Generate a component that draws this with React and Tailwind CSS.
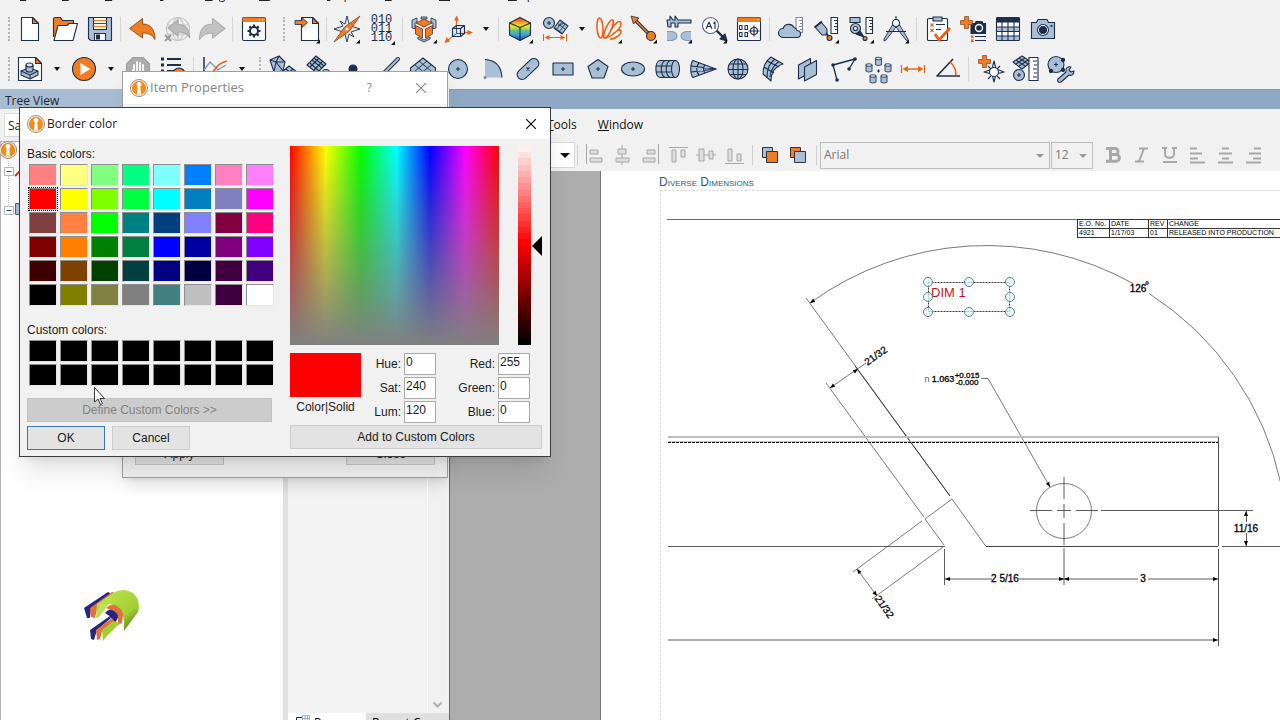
import React from "react";

const NAVY = "#1c2f4a";
const STEEL = "#a9bfd6";
const ORANGE = "#f07d22";

const Icon = ({ children, more }) => (
  <svg
    viewBox="0 0 24 24"
    className="w-6 h-6 overflow-visible shrink-0"
    fill="none"
    stroke={NAVY}
    strokeWidth="1.1"
    strokeLinejoin="round"
    aria-hidden="true"
  >
    {children}
    {more && <path d="M25 22.5v4h-4z" fill="#111" stroke="none" />}
  </svg>
);

const icons = {
  newFile: (
    <>
      <path d="M3.5.5h11l6 6v17h-17z" fill="#fff" />
      <path d="M14.5.5v6h6z" fill={ORANGE} />
    </>
  ),
  open: (
    <>
      <path d="M.5 20V2.500q0-2 2-2h5l2 3h11v6" fill={ORANGE} />
      <path d="M5 8.500h9l2-2h8.500L20 23.500H1z" fill="#fff" />
    </>
  ),
  save: (
    <>
      <path d="M.5.500h23v23H3l-2.500-2z" fill={STEEL} />
      <path d="M5.500.500h13v12h-13z" fill="#fff" />
      <path d="M5.500 3.500h13M5.500 9.500h13" stroke={ORANGE} />
      <path d="M5.500 6.500h13" stroke="#3a4d68" />
      <path d="M6.500 16.500h11v7h-11z" fill="#fff" />
      <path d="M8.500 18h3v4h-3z" fill={NAVY} />
    </>
  ),
  undo: (
    <path
      d="M-.5 11.500 12.500 1.500v5.500c8 0 12.500 5 12.500 15.500-3-5-6.500-6.500-12.500-6.500v5z"
      fill={ORANGE}
      stroke="#7c3b10"
      strokeWidth=".8"
    />
  ),
  globeUndo: (
    <g stroke="#c4c4c4">
      <circle cx="13" cy="12" r="11.500" fill="#efefef" />
      <ellipse cx="13" cy="12" rx="5.500" ry="11.500" />
      <path d="M2 8h22M2 17h22M13 0v24" />
      <path
        d="M3 11 13 3v4.500c8 0 11.500 4 11.500 13-3-4-5-5.500-11.500-5.500v4z"
        fill="#bcbcbc"
        stroke="#a8a8a8"
      />
      <path d="m0 18 6 6m0-6-6 6" stroke="#9a9a9a" strokeWidth="2" />
    </g>
  ),
  redo: (
    <path
      d="M25 11.500 12.500 1.500v5.500C4.500 7-.5 12-.5 22.500c3-5 6.500-6.500 13-6.500v5z"
      fill="#c2c2c2"
      stroke="#adadad"
    />
  ),
  settings: (
    <>
      <rect x=".5" y=".5" width="23" height="23" rx="1.500" fill="#fff" />
      <path d="M1 1h22v3.500H1z" fill={ORANGE} stroke={ORANGE} />
      <path d="M17 2.800h1m2 0h1" stroke="#fff" strokeWidth="1.500" />
      <path
        d="M12 7.500v3m0 7v3M5.500 14h3m7 0h3M7.400 9.400l2.100 2.100m5 5 2.100 2.100M16.600 9.400l-2.100 2.100m-5 5-2.100 2.100"
        strokeWidth="2.200"
      />
      <circle cx="12" cy="14" r="4" fill="#fff" strokeWidth="2" />
    </>
  ),
  importFile: (
    <>
      <path d="M6.500.500h11l6 6v17h-17z" fill="#fff" />
      <path d="M17.500.500v6h6z" fill={ORANGE} />
      <path d="M0 3.500h7v-3l5.500 5-5.500 5v-3H0z" fill={ORANGE} strokeWidth=".8" />
    </>
  ),
  star: (
    <>
      <path
        d="m12-1 2 8 5-3-3 5 9 3-9 3 3 5-5-3-2 8-2-8-5 3 3-5-9-3 9-3-3-5 5 3z"
        fill="#dfe8f1"
        strokeWidth=".9"
      />
      <path d="M25-1 14.500 14-1 25 9.500 10z" fill={ORANGE} stroke="#7c3b10" strokeWidth=".7" />
      <circle cx="12" cy="12" r="1.500" fill="#fff" stroke="none" />
    </>
  ),
  parts: (
    <>
      <path d="m0 3 5-2v4L3 6v6l-3-1zM24 3l-5-2v4l2 1v6l3-1zM6 20l6 3 6-3v2l-6 3-6-3zM9 0h6v2H9z" fill={STEEL} strokeWidth=".8" />
      <path d="m12 2 8 4-8 4-8-4z" fill={ORANGE} stroke="#5a3520" strokeWidth=".8" />
      <path d="m3.500 8.500 7 3.500v9l-7-4z" fill={ORANGE} stroke="#5a3520" strokeWidth=".8" />
      <path d="m20.500 8.500-7 3.500v9l7-4z" fill={ORANGE} stroke="#5a3520" strokeWidth=".8" />
    </>
  ),
  axes: (
    <>
      <path d="M9.500 11V1M18 15.500h5M5 20l-5 4" stroke="#e8641b" strokeWidth="1.300" />
      <path
        d="M9.500-1.500 12 3.500H7zM26 15.500 20.500 13v5zM-2.500 26 3 24.500-.5 20z"
        fill="#e8641b"
        stroke="none"
      />
      <path d="M5.500 11.500h8v8h-8zM5.500 11.500l4-3h8v8l-4 3M13.500 11.500l4-3" fill="#dbe5ef" />
      <path d="M9.500 8.500v8h8m-8 0-4 3" strokeWidth=".8" />
    </>
  ),
  rainbow: (
    <>
      <defs>
        <linearGradient id="spectrum" x1="0" y1="0" x2="0" y2="1">
          <stop offset="0" stopColor="#e8281e" />
          <stop offset=".22" stopColor="#f7a51c" />
          <stop offset=".38" stopColor="#f2ea1f" />
          <stop offset=".58" stopColor="#5fc08c" />
          <stop offset=".75" stopColor="#3f9ed8" />
          <stop offset="1" stopColor="#2747a8" />
        </linearGradient>
      </defs>
      <path d="M12 .5 22.500 6v12L12 23.500 1.500 18V6z" fill="url(#spectrum)" />
      <path d="M1.500 6 12 10.500 22.500 6M12 10.500v13" />
    </>
  ),
  gauge: (
    <>
      <circle cx="6" cy="6" r="5.500" fill={STEEL} />
      <path d="M6 4v4M4 6h4" />
      <path d="m17 3 8 6-6 8-8-6z" fill={STEEL} />
      <path d="m14 6 8 6m-7-3 6-3m-9 5 8 6m-1-12-6 8m9-6-6 8" strokeWidth=".8" />
      <path d="M.5 17v7M23.500 17v7M3 20.500h18" stroke="#e8641b" />
      <path d="m1.500 20.500 5-2.500v5zM22.500 20.500l-5-2.500v5z" fill="#e8641b" stroke="none" />
    </>
  ),
  flow: (
    <g stroke="#e8641b" strokeWidth="1.600">
      <ellipse cx="3" cy="11" rx="3" ry="10" transform="rotate(-4 3 11)" />
      <ellipse cx="11.500" cy="12" rx="2.700" ry="10" transform="rotate(24 11.500 12)" />
      <path d="M8 21c4 0 17-9 16-15-1-4-7 1-10 7M13 22c4 1 12-5 11-8-1-2-5 0-8 3" />
    </g>
  ),
  probe: (
    <>
      <path d="M2 2 19 19" strokeWidth="3.500" />
      <path d="M2 2 19 19" stroke={ORANGE} strokeWidth="1.600" />
      <path d="M-1-1 7 1 1.500 7z" fill={ORANGE} strokeWidth=".8" />
      <circle cx="19" cy="19" r="4.500" fill={ORANGE} />
    </>
  ),
  caliper: (
    <>
      <path d="M0 3h3v-4l3 4h2v-4l3 4h13v3H11v4H8V6H4v4H1z" fill={STEEL} />
      <path d="M0 14.500h5q5 1 5 4.500t-5 4.500H0M24 14.500h-5q-5 1-5 4.500t5 4.500h5" fill={STEEL} stroke="#8199b3" />
    </>
  ),
  annotate: (
    <>
      <path d="m14 13 9 9" strokeWidth="2.400" />
      <path d="m25 24-7-2 5-5z" fill={NAVY} />
      <circle cx="8.500" cy="8.500" r="8" fill="#fff" stroke="#51647d" />
      <path d="m4 12 3-7 3 7M5.500 9.500h3M11.500 6.500 13 5v7" />
    </>
  ),
  readout: (
    <>
      <rect x=".5" y=".5" width="23" height="23" rx="1" fill="#fff" />
      <path d="M1 1h22v3.500H1z" fill={ORANGE} stroke={ORANGE} />
      <path d="M20 2.500h2" stroke="#fff" />
      <path d="M2.500 8.500H5v4H2.500zM8 8.500h2.500v4H8zM2.500 15.500H5v4H2.500zM8 15.500h2.500v4H8z" />
      <circle cx="17" cy="14" r="3.500" />
      <path d="M17 8.500v11M11.500 14h11" />
    </>
  ),
  cloud: (
    <>
      <path d="M17 .5h6.500v15H17z" fill="#fff" stroke="#7a8899" />
      <path d="M20 3.500h3m-2 3h2m-3 3h3m-2 3h2" stroke="#7a8899" />
      <path d="M4 20.500a4.500 4.500 0 0 1 0-9 6 6 0 0 1 11-1 4 4 0 0 1 3 3 3.500 3.500 0 0 1 0 7z" fill={STEEL} />
    </>
  ),
  scanRuler: (
    <>
      <path d="M17 .5h6.500v16H17z" fill="#fff" />
      <path d="M20 3.500h3m-2 3h2m-3 3h3m-2 3h2" />
      <path d="m1 10 6-5 6 7v6h-5z" fill={STEEL} />
      <path d="M.5 10.500 8 4.500M12 16l3 4" strokeWidth="1.800" />
      <circle cx="15.500" cy="21" r="2.500" fill={ORANGE} />
    </>
  ),
  probeRuler: (
    <>
      <path d="M17 .5h6.500v16H17z" fill="#fff" />
      <path d="M20 3.500h3m-2 3h2m-3 3h3m-2 3h2" />
      <path d="M1 .5h10v5H1z" fill={STEEL} />
      <circle cx="6.500" cy="11.500" r="5" fill={STEEL} />
      <circle cx="6.500" cy="11.500" r="2" fill="#fff" />
      <path d="m7 17 4-3 4 6z" fill={NAVY} />
      <circle cx="16" cy="21.500" r="2" fill={ORANGE} />
    </>
  ),
  compass: (
    <>
      <path d="M9 7 0 22v2l2-1L12 10zM15 7l9 15v2l-2-1L12 10z" fill={STEEL} strokeWidth=".9" />
      <path d="M2 14.500h20M12-1v4" />
      <circle cx="12" cy="6" r="3.500" fill="#fff" />
    </>
  ),
  checklist: (
    <>
      <rect x="1.500" y="1.500" width="20" height="22" rx="1" fill="#fff" />
      <path d="M7 0h9v4H7z" fill={STEEL} />
      <path d="m4.500 6.500 3 3m0-3-3 3m0 2.500 3 3m0-3-3 3" stroke="#e8641b" />
      <path d="M10 7.500h9M10 12.500h5" />
      <path d="m9 17 4 6 11-12" stroke="#e8641b" strokeWidth="3" />
    </>
  ),
  addShot: (
    <>
      <path d="M10 6.500h4l1-2h6l1 2h2.500v10H10z" fill={NAVY} />
      <circle cx="18" cy="11" r="3.500" fill={NAVY} stroke="#fff" strokeWidth="1.400" />
      <path d="M3.500-.5h4v4h4v4h-4v4h-4v-4h-4v-4h4z" fill={ORANGE} stroke="#8a4415" strokeWidth=".7" />
      <path d="m10 18.500 2.500 2.500m0-2.500L10 21m0 1.500 2.500 2.500m0-2.500L10 25" stroke="#e8641b" />
      <path d="M14 19.500h11M14 23.500h11" />
    </>
  ),
  grid: (
    <>
      <rect x=".5" y=".5" width="23" height="23" rx="1" fill="#fff" />
      <path d="M1 1h22v4H1z" fill={NAVY} />
      <path d="M1 10h22v4H1zM1 19h22v4H1z" fill={STEEL} stroke="none" />
      <path d="M.5 10h23M.5 14.500h23M.5 19h23M6 5v18.500M12 5v18.500M18 5v18.500" />
    </>
  ),
  camera: (
    <>
      <path d="M.5 5.500h5l1.500-3h9l1.500 3h6v16H.5z" fill={STEEL} />
      <circle cx="12" cy="13" r="5.500" fill="#fff" />
      <circle cx="12" cy="13" r="3.500" fill={NAVY} />
      <path d="M19.500 9h2" strokeWidth="1.800" />
    </>
  ),
  partFile: (
    <>
      <path d="M.5.500h17l6 6v17H.5z" fill="#fff" />
      <path d="M17.500.500v6h6z" fill={ORANGE} />
      <path d="m3 14 8-3 9 3v4l-8 4-9-4z" fill={STEEL} />
      <path d="m3 14 9 4 8-4M12 18v4" />
      <path d="M8 8v5a3.500 2 0 0 0 7 0V8" fill={STEEL} />
      <ellipse cx="11.500" cy="8" rx="3.500" ry="2" fill="#d9e3ee" />
    </>
  ),
  play: (
    <>
      <circle cx="12" cy="12" r="11.500" fill={ORANGE} />
      <path d="m8.500 6 10 6-10 6z" fill="#fff" stroke="none" />
    </>
  ),
  stop: (
    <>
      <path d="M7 .5h10l6.500 6.500v10L17 23.500H7L.5 17V7z" fill="#adadad" stroke="#9e9e9e" />
      <path d="M8 15V8m3 6V5m3 9V6m3 9V8M7 13v4l4 5h5l2-5" stroke="#f4f4f4" strokeWidth="2" strokeLinecap="round" />
    </>
  ),
  macro: (
    <>
      <path d="M0 2h3m-3 6h3m-3 6h3" strokeWidth="3" />
      <path d="M6 2h14M6 8h14M6 14h14" strokeWidth="2" />
      <circle cx="18" cy="17" r="6" fill={ORANGE} />
    </>
  ),
  chart: (
    <>
      <path d="M1 0v23h22" strokeWidth="1.500" />
      <path d="m1 13 6-8 8 8 8-5" stroke="#7f9ab6" strokeWidth="1.300" />
      <path d="M2 20q8-4 11-9t11-7" stroke="#e8641b" strokeWidth="1.700" />
    </>
  ),
  mesh: (
    <>
      <path d="M-1 3 8-1l6 6-2 9-9 1z" fill={STEEL} />
      <path d="m-1 3 6 2h9M8-1 5 5 3 15M5 5l7 9" />
      <path d="m18 9 8 6-8 6-7-6z" fill={STEEL} />
      <path d="m15 12 7 6m0-6-7 6" />
    </>
  ),
  surface: (
    <>
      <path d="m10-1 10 8-9 9-10-8z" fill={STEEL} />
      <path d="m8 1 10 8M6 3l10 8M4 6l9 8M13 1 4 10M17 4l-9 9" />
      <circle cx="20" cy="17" r="4.500" fill={STEEL} />
    </>
  ),
  point: <circle cx="12" cy="12" r="4" fill={NAVY} />,
  line: (
    <>
      <path d="M2 22 22 2" strokeWidth="4" strokeLinecap="round" />
      <path d="M2 22 22 2" stroke={STEEL} strokeWidth="2.200" strokeLinecap="round" />
    </>
  ),
  plane: (
    <>
      <path d="m12 1 12.500 10v4L12 24-.5 15v-4z" fill={STEEL} />
      <path d="m8 4 12 10M4 8l12 10M16 4 4 14M20 8 8 18" strokeWidth=".9" />
    </>
  ),
  circle: (
    <>
      <circle cx="12" cy="12" r="9.500" fill={STEEL} />
      <path d="M12 10v4M10 12h4" />
    </>
  ),
  arc: (
    <>
      <path d="M4 20.500v-18q16 1 17 18z" fill={STEEL} stroke="none" />
      <path d="M4 2.500q16 1 17 18" />
      <circle cx="4" cy="20.500" r="1.500" fill="#7a8796" stroke="none" />
    </>
  ),
  slot: (
    <>
      <rect x="-1" y="7" width="26" height="10" rx="5" fill={STEEL} transform="rotate(-43 12 12)" />
      <path d="m10.500 10.500 3 3m0-3-3 3" />
    </>
  ),
  rect: (
    <>
      <path d="M2 6h20v12H2z" fill={STEEL} />
      <path d="M12 10v4M10 12h4" />
    </>
  ),
  polygon: (
    <>
      <path d="m12 2.500 10 7L18 21H6L2 9.500z" fill={STEEL} />
      <path d="M12 10v4M10 12h4" />
    </>
  ),
  ellipse: (
    <>
      <ellipse cx="12" cy="12" rx="11.500" ry="7" fill={STEEL} />
      <path d="M12 10v4M10 12h4" />
    </>
  ),
  cylinder: (
    <>
      <path d="M4 3.500h16v17H4C-1.500 20.500-1.500 3.500 4 3.500z" fill={STEEL} />
      <path d="M9 3.500c-5 3-5 14 0 17M14 3.500c-5 3-5 14 0 17M0 9h15M0 15h15" />
      <ellipse cx="19.500" cy="12" rx="4" ry="8.500" fill={STEEL} />
    </>
  ),
  cone: (
    <>
      <path d="M2 3.500 25 12 2 20.500c-3-3-3-14 0-17z" fill={STEEL} />
      <path d="M8 6c-3 3-3 9 0 12M14 8c-2 2-2 6 0 8M0 9l25 3L0 15" />
    </>
  ),
  sphere: (
    <>
      <circle cx="12" cy="12" r="10" fill={STEEL} />
      <ellipse cx="12" cy="12" rx="5" ry="10" />
      <path d="M12 2v20M3.500 7h17M2 12.500h20M3.500 17.500h17" />
    </>
  ),
  freeform: (
    <>
      <path d="m10 0 12 7q-12 4-12 17L2 17Q2 6 10 0z" fill={STEEL} />
      <path d="m6 4 12 6M3 10l10 6M14 2Q6 8 6 20M18 4.500Q10 10 9 20" />
    </>
  ),
  planes: (
    <>
      <path d="m2.500 8 12-6.500v14l-12 6.500z" fill={STEEL} />
      <path d="m8.500 10 12-6.500v14l-12 6.500z" fill={STEEL} />
    </>
  ),
  polyline: (
    <>
      <path d="m6 23-4-15L24 2l-6 10" strokeWidth="1.300" />
      <path d="M6 23h.1M2 8h.1M24 2h.1M18 12h.1" strokeWidth="3.500" strokeLinecap="round" />
    </>
  ),
  pattern: (
    <>
      {[
        [9.500, 0],
        [0, 6.500],
        [19, 6.500],
        [4, 17.500],
        [15, 17.500],
      ].map(([x, y]) => (
        <g key={`${x}-${y}`} transform={`translate(${x} ${y})`} stroke="#43566f">
          <path d="M0 1.500v6q3 2 6 0v-6" fill={STEEL} />
          <ellipse cx="3" cy="1.500" rx="3" ry="1.300" fill="#dbe5ef" />
        </g>
      ))}
      <path d="M12.500 12.500v3M11 14h3" />
    </>
  ),
  distance: (
    <>
      <path d="M.5 8v8M23.500 8v8M3 12h18" stroke="#e8641b" strokeWidth="1.300" />
      <path d="m1.500 12 5.500-3v6zM22.500 12 17 9v6z" fill="#e8641b" stroke="none" />
    </>
  ),
  angle: (
    <>
      <path d="M17 2 1 19h23" strokeWidth="1.600" />
      <path d="M14 5q6 5 6 13" stroke="#e8641b" strokeWidth="1.600" />
    </>
  ),
  addStar: (
    <>
      <path d="m10 9 3 3m9-3-3 3m-9 10 3-3m9 3-3-3" />
      <path d="m16 4 2 8 8 3-8 2-2 8-2-8-8-2 8-3z" fill="#fff" />
      <circle cx="16" cy="15" r="4.500" fill="#fff" />
      <path d="M4.500-1.500h4v4h4v4h-4v4h-4v-4h-4v-4h4z" fill={ORANGE} stroke="#8a4415" strokeWidth=".7" />
    </>
  ),
  measureSet: (
    <>
      <path d="m9-1 9 6-9 7-9-7z" fill={STEEL} />
      <path d="m6 1 9 6M3 3l9 6M12 1 3 7m12-4-9 6" />
      <circle cx="6" cy="18" r="5.500" fill={STEEL} />
      <path d="M6 16v4M4 18h4" />
      <path d="M16 .5h9v23h-9z" fill="#fff" />
      <path d="M20 4h4m-3 4h3m-4 4h4m-3 4h3m-4 4h4" />
    </>
  ),
  circleTool: (
    <>
      <circle cx="8" cy="7.500" r="8" fill={STEEL} />
      <path d="M8 5.500v4M6 7.500h4" />
      <circle cx="3" cy="14" r="1.600" fill={NAVY} />
      <circle cx="15" cy="3" r="1.600" fill={NAVY} />
      <circle cx="15" cy="13" r="1.600" fill={NAVY} />
      <path d="m10 22 8-7c-1-4 2-6 5-5l-2 3 2 2 3-1c0 4-3 5-5 4l-8 7c-3 1-4-1-3-3z" fill={STEEL} />
    </>
  ),
};

const topRow = [
  "grip",
  ["newFile", "New"],
  ["open", "Open"],
  ["save", "Save"],
  "sep",
  ["undo", "Undo"],
  ["globeUndo", "Undo all"],
  ["redo", "Redo"],
  "sep",
  ["settings", "Options"],
  "gripWide",
  ["importFile", "Import", true],
  "sepTight",
  ["star", "Align", true],
  ["binary", "Digitize", true],
  "sep",
  ["parts", "Pieces", true],
  ["axes", "Coordinate systems"],
  "drop",
  "sep",
  ["rainbow", "Color map", true],
  ["gauge", "Features"],
  "drop",
  ["flow", "Cross-sections", true],
  ["probe", "Comparison points", true],
  ["caliper", "Gauges", true],
  ["annotate", "Annotations", true],
  ["readout", "Digital readout"],
  "sep",
  ["cloud", "Scan"],
  ["scanRuler", "Probe scan", true],
  ["probeRuler", "Probe", true],
  ["compass", "Construct", true],
  "sep",
  ["checklist", "Review"],
  ["addShot", "Add snapshot"],
  ["grid", "Table"],
  ["camera", "Snapshot"],
];

const bottomRow = [
  "grip",
  ["partFile", "Piece"],
  "drop",
  ["play", "Play"],
  "drop",
  ["stop", "Pause"],
  ["macro", "Sequence"],
  "sep",
  ["chart", "Statistics"],
  "drop",
  "gripNarrow",
  ["mesh", "Mesh"],
  ["surface", "Surface"],
  ["point", "Point"],
  ["line", "Line"],
  ["plane", "Plane"],
  ["circle", "Circle"],
  ["arc", "Arc"],
  ["slot", "Slot"],
  ["rect", "Rectangle"],
  ["polygon", "Polygon"],
  ["ellipse", "Ellipse"],
  ["cylinder", "Cylinder"],
  ["cone", "Cone"],
  ["sphere", "Sphere"],
  ["freeform", "Freeform surface"],
  ["planes", "Parallel planes"],
  ["polyline", "Polyline"],
  ["pattern", "Pattern"],
  ["distance", "Distance"],
  ["angle", "Angle"],
  "sep",
  ["addStar", "New alignment"],
  ["measureSet", "Measure"],
  ["circleTool", "Edit feature"],
];

const Grip = ({ className }) => (
  <span className={`flex h-6 shrink-0 ${className}`}>
    <span className="border-l-2 border-dotted border-[#b4b4b4]" />
  </span>
);

const ToolRow = ({ items }) => (
  <div className="flex h-10 items-center">
    {items.map((item, i) => {
      if (item === "sep" || item === "sepTight")
        return (
          <span
            key={i}
            className={`h-6 w-px shrink-0 bg-[#d4d4d4] ${
              item === "sep" ? "mx-[3px]" : "mx-0.5"
            }`}
          />
        );
      if (item === "grip") return <Grip key={i} className="w-3 pl-2" />;
      if (item === "gripWide") return <Grip key={i} className="w-[18px] pl-3" />;
      if (item === "gripNarrow") return <Grip key={i} className="w-[14px] pl-2" />;
      if (item === "drop")
        return (
          <button
            key={i}
            aria-label="More options"
            className="flex w-[19px] shrink-0 justify-center"
          >
            <svg viewBox="0 0 6 4" className="h-1 w-1.5">
              <path d="M0 0h6L3 4z" fill="#111" />
            </svg>
          </button>
        );
      const [name, label, more] = item;
      return (
        <button
          key={i}
          aria-label={label}
          className="relative flex w-[35px] shrink-0 items-center justify-center"
        >
          {name === "binary" ? (
            <>
              <span className="font-['Liberation_Mono',monospace] text-[12px] leading-[9px] text-[#1c2f4a]">
                010
                <br />
                011
                <br />
                110
              </span>
              <svg viewBox="0 0 4 4" className="absolute -bottom-0.5 right-1 h-1 w-1">
                <path d="M4 0v4H0z" fill="#111" />
              </svg>
            </>
          ) : (
            <Icon more={more}>{icons[name]}</Icon>
          )}
        </button>
      );
    })}
  </div>
);

const AppLogo = () => (
  <svg viewBox="0 0 18 18" className="h-[18px] w-[18px] shrink-0" aria-hidden="true">
    <circle cx="9" cy="9" r="8.500" fill="#fff" stroke="#7d6a58" strokeWidth=".8" />
    <circle cx="9" cy="9" r="7.200" fill="#f28c1a" />
    <path
      d="M9 3a2.300 2.300 0 0 1 1.300 4.300L11 15.500H7l.7-8.200A2.300 2.300 0 0 1 9 3z"
      fill="#fff"
    />
  </svg>
);

const CloseIcon = () => (
  <svg viewBox="0 0 10 10" className="h-2.5 w-2.5" aria-hidden="true">
    <path d="m0 0 10 10M10 0 0 10" stroke="currentColor" strokeWidth="1.100" />
  </svg>
);

const topMenu = [
  ["File", "w-[42px]"],
  ["Edit", "w-[43px]"],
  ["View", "w-[55px]"],
  ["Insert", "w-[45px]"],
  ["Align", "w-[54px]"],
  ["Measure", "w-[68px]"],
  ["Inspect", "w-[58px]"],
  ["Tools", "w-[54px]"],
  ["Window", "w-[69px]"],
  ["Help", "w-[40px]"],
];

const TreeView = () => (
  <aside className="flex w-[283px] shrink-0 flex-col bg-white">
    <h2 className="h-5 bg-[#a8bdd2] pl-[5px] text-[12px] leading-6 text-[#1e2a38]">
      Tree View
    </h2>
    <div className="h-8 shrink-0 bg-[#f1f1f1] px-1 py-1">
      <div className="h-6 border border-[#dcdcdc] bg-white pl-[3px] text-[12px] leading-6 text-[#222]">
        Saved
      </div>
    </div>
    <div className="min-h-0 flex-1 border-t border-l border-[#b5b5b5]">
      <div className="flex h-4 items-center">
        <span className="-ml-0.5">
          <AppLogo />
        </span>
      </div>
      <svg viewBox="0 0 24 64" className="h-16 w-6" fill="none">
        <path d="M7.500 3v9M7.500 18v30" stroke="#bcbcbc" strokeDasharray="1 1" />
        <path d="M3.500 9.500h9v8h-9zM3.500 48.500h9v8h-9z" fill="#fff" stroke="#b8b8b8" />
        <path d="M5.500 13.500h5M5.500 52.500h5" stroke="#2f4a8a" />
        <path d="m14 18 6-6" stroke="#d93a1f" strokeWidth="2" />
        <path d="M14.500 45.500h7v11h-7z" fill={STEEL} stroke="#4c607b" />
      </svg>
      <svg viewBox="0 0 58 54" className="mt-[366px] ml-[82px] h-[54px] w-[58px]">
        <defs>
          <linearGradient id="lime" x1=".3" y1=".1" x2="1" y2="1">
            <stop offset="0" stopColor="#b9e04a" />
            <stop offset=".55" stopColor="#a2cf34" />
            <stop offset="1" stopColor="#3f6b12" />
          </linearGradient>
        </defs>
        <path d="M1 20 25 4l2 1-1 3-18 12-1 10H4z" fill="#23277f" />
        <path d="M7 20 29 4l3 1-3 5-15 11-2 9-4-1z" fill="#e2703a" />
        <path
          d="M14 16 30 5q10-6 20 0 8 7 5 19L41 43V33Q39 18 26 16l-10 13-3 1z"
          fill="url(#lime)"
        />
        <path d="m18 16 9 1-12 12-2-1z" fill="#fff" opacity=".15" />
        <path d="M23 20q4-4 9-3 8 4 8 10l-1 8-4 2q1-13-12-17z" fill="#e2703a" />
        <path d="M22 25q3-4 7-3 6 3 6 7l-3 7-3-5q-3-4-7-6z" fill="#23277f" />
        <path d="m7 42 20-14 1 2-14 12-3 10-3-1z" fill="#23277f" />
        <path d="m13 42 16-12 2 3-12 10-2 8-3 1z" fill="#e2703a" />
        <path d="m19 42 12-9 6 2-14 14-3 4z" fill="#a2cf34" />
      </svg>
    </div>
  </aside>
);

const PropertyPanel = () => (
  <section className="flex w-[161px] shrink-0 flex-col bg-[#f3f3f3]">
    <div className="flex min-h-0 flex-1 justify-end pr-0.5">
      <div className="flex w-5 flex-col items-center justify-end border-l border-white bg-[#f1f1f1] pb-1">
        <svg viewBox="0 0 9 8" className="h-2 w-[9px]" fill="none">
          <path d="m.5 1.500 4 4 4-4" stroke="#b0b0b0" strokeWidth="2" />
        </svg>
      </div>
    </div>
    <div role="tablist" className="flex h-[7px] shrink-0 items-start overflow-hidden text-[12px] leading-5">
      <button role="tab" className="flex h-5 w-[78px] items-start gap-1 bg-white pl-2">
        <svg viewBox="0 0 14 14" className="mt-0.5 h-3.5 w-3.5 shrink-0" fill="none">
          <path d="M.5 2.500h6v9h-6z" stroke={NAVY} />
          <path d="M6.500.500h7v9h-7zM9 0v9M11.500 0v9M6 3.500h8" stroke="#9fb0c2" />
        </svg>
        Pages
      </button>
      <button role="tab" className="h-5 flex-1 bg-[#e0e0e0] pl-[6px] text-left whitespace-nowrap">
        Report Co
      </button>
    </div>
  </section>
);

const fmtIcons = {
  left: <path d="M.5-3v20M4 3h8v4H4zM4 11h12v4H4z" />,
  center: <path d="M8-2v4M8 7v4M8 15v3M4 2h8v5H4zM2 11h13v4H2z" />,
  right: <path d="M16.500-3v20M5 3h8v4H5zM1 11h12v4H1z" />,
  top: <path d="M-1 .500h19M2 3h4v12H2zM11 3h4v7h-4z" />,
  middle: <path d="M-2 8h3M6 8h5M15 8h3M1 2h5v12H1zM11 4h4v8h-4z" />,
  bottom: <path d="M-1 16.500h19M2 2h4v12H2zM11 7h4v7h-4z" />,
};

const textAlignIcons = {
  "Align left": "M0 1.500h7M0 6.500h12M0 11.500h8M0 15.500h15",
  "Align center": "M4 1.500h7M1 6.500h13M4 11.500h7M0 15.500h15",
  "Align right": "M8 1.500h7M3 6.500h12M7 11.500h8M0 15.500h15",
};

const BarSep = () => <span className="mr-[3px] ml-1 h-5 w-px shrink-0 bg-[#cfcfcf]" />;

const FormatBar = () => (
  <div className="flex h-[30px] shrink-0 items-center pb-0.5">
    <div className="flex h-[26px] w-[126px] shrink-0 items-center justify-end border border-[#d8d8d8] bg-white pr-1">
      <svg viewBox="0 0 10 5" className="h-[5px] w-2.5">
        <path d="M0 0h10L5 5z" fill="#111" />
      </svg>
    </div>
    <span className="mx-0.5 h-5 w-px shrink-0 bg-[#cfcfcf]" />
    {Object.entries(fmtIcons).map(([name, path]) => (
      <button
        key={name}
        aria-label={`Align objects ${name}`}
        className="flex w-7 shrink-0 justify-center"
      >
        <svg viewBox="0 0 17 17" className="h-[17px] w-[17px] overflow-visible" fill="#dedede" stroke="#a6a6a6">
          {path}
        </svg>
      </button>
    ))}
    <BarSep />
    <button aria-label="Bring to front" className="flex w-7 shrink-0 justify-center">
      <svg viewBox="0 0 16 16" className="h-4 w-4" stroke="#333">
        <path d="M.5.500h10v10H.5z" fill={STEEL} />
        <path d="M4.500 4.500h11v11h-11z" fill={ORANGE} />
      </svg>
    </button>
    <button aria-label="Send to back" className="flex w-7 shrink-0 justify-center">
      <svg viewBox="0 0 16 16" className="h-4 w-4" stroke="#333">
        <path d="M.5.500h10v10H.5z" fill={ORANGE} />
        <path d="M4.500 4.500h11v11h-11z" fill={STEEL} />
      </svg>
    </button>
    <BarSep />
    <div className="relative w-[230px] shrink-0">
      <select
        disabled
        aria-label="Font"
        className="block h-[27px] w-full appearance-none border border-[#bdbdbd] bg-[#f1f1f1] pl-[3px] text-[12px] text-[#777] opacity-100"
      >
        <option>Arial</option>
      </select>
      <svg viewBox="0 0 8 4" className="pointer-events-none absolute top-3 right-1.5 h-1 w-2">
        <path d="M0 0h8L4 4z" fill="#999" />
      </svg>
    </div>
    <div className="relative ml-px w-[42px] shrink-0">
      <select
        disabled
        aria-label="Font size"
        className="block h-[27px] w-full appearance-none border border-[#bdbdbd] bg-[#f1f1f1] pl-[3px] text-[12px] text-[#777] opacity-100"
      >
        <option>12</option>
      </select>
      <svg viewBox="0 0 8 4" className="pointer-events-none absolute top-3 right-1.5 h-1 w-2">
        <path d="M0 0h8L4 4z" fill="#999" />
      </svg>
    </div>
    <div className="ml-1.5 flex text-[#a8a8a8]">
      <button aria-label="Bold" className="flex w-7 justify-center">
        <svg viewBox="0 0 15 16" className="h-4 w-[15px]" fill="none" stroke="currentColor">
          <path d="M0 1.500h9a3 3 0 0 1 0 6H5h5a3.300 3.300 0 0 1 0 6.800H0M4.500 1v13" strokeWidth="3" />
        </svg>
      </button>
      <button aria-label="Italic" className="flex w-7 justify-center">
        <svg viewBox="0 0 15 16" className="h-4 w-[15px]" fill="none" stroke="currentColor">
          <path d="M5 1.500h9M1 14.500h9M10 1.500l-5 13" strokeWidth="2" />
        </svg>
      </button>
      <button aria-label="Underline" className="flex w-7 justify-center">
        <svg viewBox="0 0 15 16" className="h-4 w-[15px]" fill="none" stroke="currentColor">
          <path d="M0 1h5M10 1h5M3 1v6c0 5 9 5 9 0V1M1 15h14" strokeWidth="1.900" />
        </svg>
      </button>
      {Object.entries(textAlignIcons).map(([label, d]) => (
        <button key={label} aria-label={label} className="flex w-7 justify-center">
          <svg viewBox="0 0 15 17" className="h-[17px] w-[15px]" fill="none" stroke="currentColor">
            <path d={d} strokeWidth="2" />
          </svg>
        </button>
      ))}
    </div>
  </div>
);

// arrow head whose tip sits on x,y
const Arrow = ({ x, y, angle }) => (
  <path
    d="M0 0-5-2v4z"
    fill="#000"
    stroke="none"
    transform={`translate(${x} ${y}) rotate(${angle})`}
  />
);

const Drawing = () => (
  <svg
    viewBox="601 171 679 549"
    className="absolute top-0 left-0 h-[549px] w-[679px] font-['Liberation_Sans',sans-serif]"
    fill="none"
    stroke="#555"
    strokeWidth=".8"
  >
    <path d="M660.500 190.500H1280M660.500 190.500V720" stroke="#c4c4c4" strokeDasharray="2 2" />
    <path d="M667 219.500h613" stroke="#444" />
    <path d="M810 303A300.500 300.500 0 0 1 1133 283.500M1149 293.500A300.500 300.500 0 0 1 1281 484" />
    <path d="M806 298 950 496M952 499l34 47.500h232M826 383l98 134M925 519l19 26" />
    <path d="m855 366 95 130" stroke="#222" />
    <path d="m830 388 36-25M952 499l-27 20M922 521l-69 51M943 547l-71 52M857 569l20 27" />
    <path d="M981 378.500h7L1050 487" />
    <path d="M668 437h550" stroke="#bdbdbd" strokeWidth="2" />
    <path d="M668 441.500h550" stroke="#bbb" />
    <path d="M668 442.500h550" stroke="#000" strokeWidth="1.200" strokeDasharray="3 1" />
    <path d="M1218.500 437v109M1218.500 549v97" stroke="#222" />
    <path d="M668 546.500h277M1222 546.500h58M986 546.500h232" stroke="#333" />
    <circle cx="1064" cy="511" r="27.500" />
    <path d="M1064 477v22M1064 504v14M1064 523v22M1064 548v37M1030 510.500h22M1057 510.500h14M1076 510.500h22M1101 510.500h152" stroke="#333" />
    <path d="M944.500 549v36M945 579h47M1019 579h45M1064 579h74M1148 579h70M668 640h550M1246.500 511v11M1246.500 533v13" stroke="#333" />
    <Arrow x={810} y={303} angle={147} />
    <Arrow x={830} y={388} angle={145} />
    <Arrow x={858} y={369} angle={-35} />
    <Arrow x={857} y={569} angle={-127} />
    <Arrow x={877} y={596} angle={53} />
    <Arrow x={1050} y={487} angle={60} />
    <Arrow x={945} y={579} angle={180} />
    <Arrow x={1064} y={579} angle={0} />
    <Arrow x={1064} y={579} angle={180} />
    <Arrow x={1218} y={579} angle={0} />
    <Arrow x={1218} y={640} angle={0} />
    <Arrow x={1246} y={511} angle={-90} />
    <Arrow x={1246} y={546} angle={90} />
    <g fill="#000" stroke="#000" strokeWidth=".3" fontSize="10" textAnchor="middle">
      <text x="1138" y="292">126</text>
      <text x="1147" y="289">°</text>
      <text x="0" y="3" transform="translate(876 356) rotate(-35)">21/32</text>
      <text x="0" y="3" transform="translate(884 607) rotate(55)">21/32</text>
      <text x="943" y="382" fontSize="9">1.063</text>
      <text x="927" y="382" fontSize="9" fill="#555" stroke="none">n</text>
      <text x="967" y="378" fontSize="8">+0.015</text>
      <text x="967" y="385" fontSize="8">-0.000</text>
      <text x="1005" y="582">2 5/16</text>
      <text x="1143" y="582">3</text>
      <text x="1246" y="532">11/16</text>
    </g>
    <path d="M928.500 282.500h81v29h-81z" stroke="#333" strokeWidth="1" strokeDasharray="2 1" />
    <text x="931" y="297" fontSize="13" fill="#c4161c" stroke="none">
      DIM 1
    </text>
    {[
      [928, 282],
      [969, 282],
      [1010, 282],
      [928, 297],
      [1010, 297],
      [928, 312],
      [969, 312],
      [1010, 312],
    ].map(([x, y]) => (
      <circle
        key={`${x}-${y}`}
        cx={x}
        cy={y}
        r="4.500"
        fill="#e2f5fa"
        fillOpacity=".7"
        stroke="#5b8594"
        strokeWidth="1"
      />
    ))}
  </svg>
);

const ReportPage = () => (
  <div className="relative min-w-0 flex-1 overflow-hidden border-l border-[#777] bg-white">
    <Drawing />
    <h1 className="absolute top-[3px] left-[58px] font-['Liberation_Sans',sans-serif] text-[12px] leading-4 whitespace-nowrap text-[#24607a] [font-variant:small-caps]">
      Diverse Dimensions
    </h1>
    <table className="absolute top-[48px] left-[476px] w-[208px] table-fixed border-collapse font-['Liberation_Sans',sans-serif] text-[7px] leading-[8px] text-black [&_td]:border [&_td]:border-[#333] [&_td]:pl-px [&_th]:border [&_th]:border-[#333] [&_th]:pl-px [&_th]:text-left [&_th]:font-normal">
      <colgroup>
        <col className="w-8" />
        <col className="w-[39px]" />
        <col className="w-[19px]" />
        <col />
      </colgroup>
      <thead>
        <tr className="whitespace-nowrap">
          <th>E.O. No.</th>
          <th>DATE</th>
          <th>REV</th>
          <th>CHANGE</th>
        </tr>
      </thead>
      <tbody>
        <tr className="whitespace-nowrap">
          <td>4921</td>
          <td>1/17/03</td>
          <td>01</td>
          <td>RELEASED INTO PRODUCTION</td>
        </tr>
      </tbody>
    </table>
  </div>
);

const ReportWindow = () => (
  <main className="flex min-w-0 flex-1 flex-col">
    <div className="h-5 shrink-0 border-t border-[#7f97b0] bg-[#8fa9c4]" />
    <nav className="flex h-8 shrink-0 items-center gap-[21px] pl-[98px] text-[12px] text-[#111]">
      <button>
        <span className="underline">T</span>ools
      </button>
      <button>
        <span className="underline">W</span>indow
      </button>
    </nav>
    <FormatBar />
    <div className="flex min-h-0 flex-1">
      <div className="w-[151px] shrink-0 border-l border-[#666] bg-[#adadad]" />
      <ReportPage />
    </div>
  </main>
);

const ItemProperties = () => (
  <div
    role="dialog"
    aria-label="Item Properties"
    className="absolute top-[71px] left-[122px] flex h-[407px] w-[326px] flex-col border border-[#a0a0a0] bg-[#f1f1f1] shadow-lg"
  >
    <div className="flex h-8 shrink-0 items-center bg-white pr-[21px] pl-[7px] text-[#858585]">
      <AppLogo />
      <span className="ml-0.5 flex-1 text-[13px]">Item Properties</span>
      <button className="mr-11 text-[12px]">?</button>
      <button aria-label="Close dialog">
        <CloseIcon />
      </button>
    </div>
    <div className="mt-auto flex justify-between px-3 pb-3 font-['Liberation_Sans',sans-serif] text-[12px] text-[#222]">
      <button className="h-[23px] w-[89px] border border-[#c4c4c4] bg-[#e3e3e3]">Apply</button>
      <button className="h-[23px] w-[89px] border border-[#c4c4c4] bg-[#e3e3e3]">Close</button>
    </div>
  </div>
);

const basicColors = [
  "#ff8080", "#ffff80", "#80ff80", "#00ff80", "#80ffff", "#0080ff", "#ff80c0", "#ff80ff",
  "#ff0000", "#ffff00", "#80ff00", "#00ff40", "#00ffff", "#0080c0", "#8080c0", "#ff00ff",
  "#804040", "#ff8040", "#00ff00", "#008080", "#004080", "#8080ff", "#800040", "#ff0080",
  "#800000", "#ff8000", "#008000", "#008040", "#0000ff", "#0000a0", "#800080", "#8000ff",
  "#400000", "#804000", "#004000", "#004040", "#000080", "#000040", "#400040", "#400080",
  "#000000", "#808000", "#808040", "#808080", "#408080", "#c0c0c0", "#400040", "#ffffff",
];
const customColors = Array(16).fill("#000000");

const Swatches = ({ colors, selected }) => (
  <div className="ml-0.5 grid w-max grid-cols-8 gap-x-[3px] gap-y-0.5">
    {colors.map((color, i) => (
      <button
        key={i}
        aria-label={color}
        className={`h-[22px] w-7 border border-t-[#8e8e8e] border-r-[#e6e6e6] border-b-[#e6e6e6] border-l-[#8e8e8e] ${
          i === selected ? "outline-1 outline-dotted outline-black" : ""
        }`}
        style={{ backgroundColor: color }}
      />
    ))}
  </div>
);

const Field = ({ label, value, labelWidth }) => (
  <label className="flex h-[22px] items-center gap-[3px]">
    <span className={`text-right ${labelWidth}`}>{label}:</span>
    <input
      defaultValue={value}
      className="h-[22px] w-8 border border-[#a8a8a8] bg-white pb-1 pl-px"
    />
  </label>
);

const STEPS = 32;

const ColorPicker = () => (
  <div className="flex w-[252px] flex-col">
    <div className="flex">
      <div className="relative h-[199px] w-[209px] bg-[linear-gradient(to_right,#f00,#ff0_17%,#0f0_34%,#0ff_51%,#00f_67%,#f0f_84%,#f00)]">
        <span className="absolute inset-0 bg-linear-to-b from-[#808080]/0 to-[#808080]" />
      </div>
      <div className="ml-[19px] flex h-[199px] w-[13px] flex-col">
        {Array.from({ length: STEPS }, (_, i) => (
          <span
            key={i}
            className="flex-1"
            style={{ backgroundColor: `hsl(0 100% ${97 - (i * 97) / (STEPS - 1)}%)` }}
          />
        ))}
      </div>
      <svg viewBox="0 0 10 20" className="mt-[90px] ml-px h-5 w-2.5">
        <path d="M10 0v20L0 10z" />
      </svg>
    </div>
    <div className="mt-2 flex">
      <div className="flex w-[71px] flex-col items-center">
        <span className="h-11 w-full bg-[#ff0000]" />
        <span className="mt-0.5 leading-4">Color|Solid</span>
      </div>
      <div className="flex flex-col gap-0.5">
        <Field label="Hue" value="0" labelWidth="w-10" />
        <Field label="Sat" value="240" labelWidth="w-10" />
        <Field label="Lum" value="120" labelWidth="w-10" />
      </div>
      <div className="flex flex-col gap-0.5">
        <Field label="Red" value="255" labelWidth="w-[59px]" />
        <Field label="Green" value="0" labelWidth="w-[59px]" />
        <Field label="Blue" value="0" labelWidth="w-[59px]" />
      </div>
    </div>
    <button className="mt-0.5 h-6 border border-[#cdcdcd] bg-[#e3e3e3]">
      Add to Custom Colors
    </button>
  </div>
);

const BorderColorDialog = () => (
  <div
    role="dialog"
    aria-label="Border color"
    className="absolute top-[107px] left-[19px] flex h-[350px] w-[532px] flex-col border border-[#3c3c3c] bg-[#f1f1f1] shadow-xl"
  >
    <div className="flex h-[31px] shrink-0 items-center bg-white pr-3.5 pl-[7px]">
      <AppLogo />
      <span className="ml-0.5 flex-1 text-[12px] text-[#222]">Border color</span>
      <button aria-label="Close dialog">
        <CloseIcon />
      </button>
    </div>
    <div className="flex justify-between pt-[7px] pr-2 pl-[7px] font-['Liberation_Sans',sans-serif] text-[12px] text-[#1a1a1a]">
      <div className="w-[245px]">
        <p className="pb-0.5 leading-4">Basic colors:</p>
        <Swatches colors={basicColors} selected={8} />
        <p className="pt-4 pb-0.5 leading-4">Custom colors:</p>
        <Swatches colors={customColors} />
        <button
          disabled
          className="mt-3 block h-6 w-full border border-[#c2c2c2] bg-[#cccccc] text-[#838383]"
        >
          Define Custom Colors &gt;&gt;
        </button>
        <div className="mt-1 flex gap-[7px]">
          <button className="h-6 w-[78px] border border-[#3d76ad] bg-[#e3e3e3]">OK</button>
          <button className="h-6 w-[78px] border border-[#cdcdcd] bg-[#e3e3e3]">Cancel</button>
        </div>
      </div>
      <ColorPicker />
    </div>
  </div>
);

export default function App() {
  return (
    <div className="relative flex h-screen flex-col overflow-hidden bg-[#f1f1f1] font-['Open_Sans','Noto_Sans',sans-serif]">
      <header className="shrink-0">
        <nav className="flex h-[9px] items-end overflow-hidden pb-1.5 pl-5 text-[12px] leading-4 text-[#222]">
          {topMenu.map(([name, width]) => (
            <button key={name} className={`shrink-0 text-left ${width}`}>
              <span className="underline">{name[0]}</span>
              {name.slice(1)}
            </button>
          ))}
        </nav>
        <ToolRow items={topRow} />
        <ToolRow items={bottomRow} />
      </header>
      <div className="flex min-h-0 flex-1">
        <TreeView />
        <div className="w-[5px] shrink-0 bg-[#e1e1e1]" />
        <PropertyPanel />
        <ReportWindow />
      </div>
      <ItemProperties />
      <BorderColorDialog />
      <svg viewBox="0 0 12 19" className="absolute top-[387px] left-[94px] h-[19px] w-3">
        <path
          d="M.5.500v14.500l3.500-3 2.500 5.500 2-1-2.500-5h4.500z"
          fill="#fff"
          stroke="#222"
          strokeWidth=".9"
        />
      </svg>
    </div>
  );
}
